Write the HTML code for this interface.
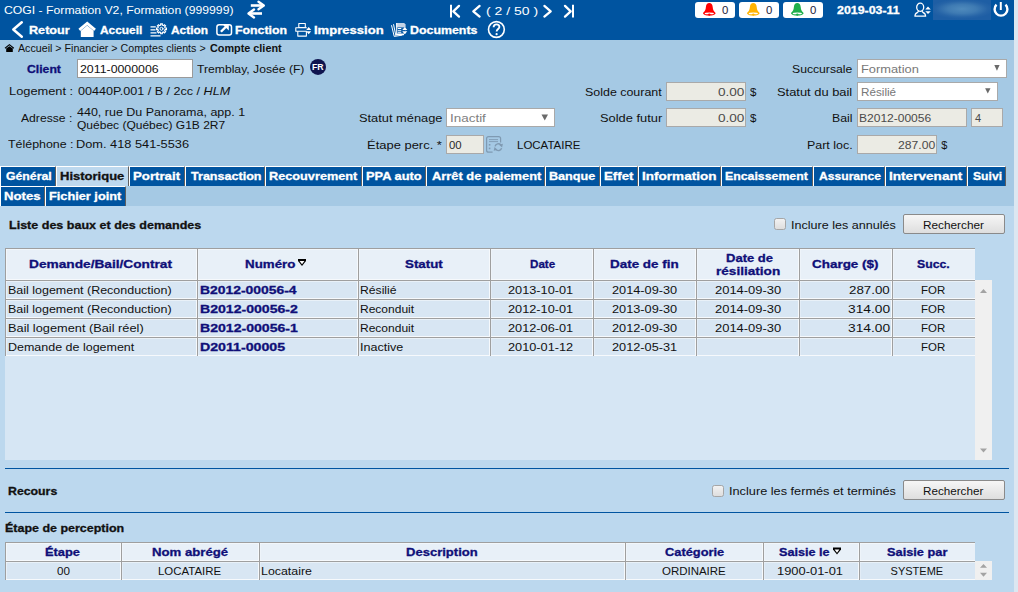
<!DOCTYPE html>
<html><head><meta charset="utf-8"><style>
html,body{margin:0;padding:0;width:1018px;height:592px;overflow:hidden;background:#A5C9E4;font-family:"Liberation Sans",sans-serif;}
</style></head><body>
<div style="position:absolute;left:0px;top:0px;width:1014px;height:40px;background:#0054A0"></div><div style="position:absolute;left:1014px;top:0px;width:4px;height:592px;background:#DCE7F1"></div><div style="position:absolute;left:0px;top:206px;width:1014px;height:386px;background:#BCD8EE"></div><div style="position:absolute;left:695px;top:2px;width:40px;height:16px;background:#fff;border-radius:3px"></div><div style="position:absolute;left:739px;top:2px;width:40px;height:16px;background:#fff;border-radius:3px"></div><div style="position:absolute;left:783px;top:2px;width:40px;height:16px;background:#fff;border-radius:3px"></div><div style="position:absolute;left:77px;top:59px;width:116px;height:19px;background:#fff;border:1px solid #9a9a9a;box-sizing:border-box"></div><div style="position:absolute;left:446px;top:108px;width:109px;height:19px;background:#fff;border:1px solid #a9a9a9;box-sizing:border-box"></div><div style="position:absolute;left:446px;top:135px;width:38px;height:19px;background:#EBEBE4;border:1px solid #a9a9a9;box-sizing:border-box"></div><div style="position:absolute;left:666px;top:82px;width:80px;height:19px;background:#EBEBE4;border:1px solid #a9a9a9;box-sizing:border-box"></div><div style="position:absolute;left:666px;top:108px;width:80px;height:19px;background:#EBEBE4;border:1px solid #a9a9a9;box-sizing:border-box"></div><div style="position:absolute;left:857px;top:59px;width:150px;height:19px;background:#fff;border:1px solid #a9a9a9;box-sizing:border-box"></div><div style="position:absolute;left:857px;top:82px;width:141px;height:19px;background:#fff;border:1px solid #a9a9a9;box-sizing:border-box"></div><div style="position:absolute;left:857px;top:108px;width:110px;height:19px;background:#EBEBE4;border:1px solid #a9a9a9;box-sizing:border-box"></div><div style="position:absolute;left:971px;top:108px;width:32px;height:19px;background:#EBEBE4;border:1px solid #a9a9a9;box-sizing:border-box"></div><div style="position:absolute;left:857px;top:135px;width:80px;height:19px;background:#EBEBE4;border:1px solid #a9a9a9;box-sizing:border-box"></div><div style="position:absolute;left:0px;top:166px;width:56px;height:20px;background:#0054A0;border-top:1px solid #fff;border-left:1px solid #fff;border-right:1px solid #5f5f5f;box-sizing:border-box"></div><div style="position:absolute;left:56px;top:166px;width:73px;height:20px;background:#BDD8EE;border-top:1px solid #fff;border-left:1px solid #fff;border-right:1px solid #5f5f5f;box-sizing:border-box"></div><div style="position:absolute;left:129px;top:166px;width:56px;height:20px;background:#0054A0;border-top:1px solid #fff;border-left:1px solid #fff;border-right:1px solid #5f5f5f;box-sizing:border-box"></div><div style="position:absolute;left:185px;top:166px;width:80px;height:20px;background:#0054A0;border-top:1px solid #fff;border-left:1px solid #fff;border-right:1px solid #5f5f5f;box-sizing:border-box"></div><div style="position:absolute;left:265px;top:166px;width:97px;height:20px;background:#0054A0;border-top:1px solid #fff;border-left:1px solid #fff;border-right:1px solid #5f5f5f;box-sizing:border-box"></div><div style="position:absolute;left:362px;top:166px;width:64px;height:20px;background:#0054A0;border-top:1px solid #fff;border-left:1px solid #fff;border-right:1px solid #5f5f5f;box-sizing:border-box"></div><div style="position:absolute;left:426px;top:166px;width:119px;height:20px;background:#0054A0;border-top:1px solid #fff;border-left:1px solid #fff;border-right:1px solid #5f5f5f;box-sizing:border-box"></div><div style="position:absolute;left:545px;top:166px;width:55px;height:20px;background:#0054A0;border-top:1px solid #fff;border-left:1px solid #fff;border-right:1px solid #5f5f5f;box-sizing:border-box"></div><div style="position:absolute;left:600px;top:166px;width:38px;height:20px;background:#0054A0;border-top:1px solid #fff;border-left:1px solid #fff;border-right:1px solid #5f5f5f;box-sizing:border-box"></div><div style="position:absolute;left:638px;top:166px;width:83px;height:20px;background:#0054A0;border-top:1px solid #fff;border-left:1px solid #fff;border-right:1px solid #5f5f5f;box-sizing:border-box"></div><div style="position:absolute;left:721px;top:166px;width:92px;height:20px;background:#0054A0;border-top:1px solid #fff;border-left:1px solid #fff;border-right:1px solid #5f5f5f;box-sizing:border-box"></div><div style="position:absolute;left:813px;top:166px;width:72px;height:20px;background:#0054A0;border-top:1px solid #fff;border-left:1px solid #fff;border-right:1px solid #5f5f5f;box-sizing:border-box"></div><div style="position:absolute;left:885px;top:166px;width:82px;height:20px;background:#0054A0;border-top:1px solid #fff;border-left:1px solid #fff;border-right:1px solid #5f5f5f;box-sizing:border-box"></div><div style="position:absolute;left:967px;top:166px;width:39px;height:20px;background:#0054A0;border-top:1px solid #fff;border-left:1px solid #fff;border-right:1px solid #5f5f5f;box-sizing:border-box"></div><div style="position:absolute;left:0px;top:186px;width:45px;height:20px;background:#0054A0;border-top:1px solid #fff;border-left:1px solid #fff;border-right:1px solid #5f5f5f;box-sizing:border-box"></div><div style="position:absolute;left:45px;top:186px;width:81px;height:20px;background:#0054A0;border-top:1px solid #fff;border-left:1px solid #fff;border-right:1px solid #5f5f5f;box-sizing:border-box"></div><div style="position:absolute;left:774px;top:218px;width:12px;height:12px;background:linear-gradient(#f2f2f2,#dedede);border:1px solid #a6a6a6;border-radius:2.5px;box-sizing:border-box"></div><div style="position:absolute;left:903px;top:214px;width:102px;height:20px;background:linear-gradient(#f6f6f6,#dedede);border:1px solid #8a8a8a;border-radius:2px;box-sizing:border-box"></div><div style="position:absolute;left:5px;top:248px;width:970px;height:32px;background:#E8F0F8"></div><div style="position:absolute;left:6px;top:249px;width:969px;height:1px;background:rgba(255,255,255,0.45)"></div><div style="position:absolute;left:6px;top:249px;width:1px;height:31px;background:rgba(255,255,255,0.45)"></div><div style="position:absolute;left:5px;top:279px;width:970px;height:1px;background:#F6F9FC"></div><div style="position:absolute;left:5px;top:248px;width:970px;height:1px;background:#9f9f9f"></div><div style="position:absolute;left:5px;top:248px;width:1px;height:32px;background:#9f9f9f"></div><div style="position:absolute;left:196px;top:249px;width:1px;height:31px;background:#F6F9FC"></div><div style="position:absolute;left:197px;top:248px;width:1px;height:32px;background:#9f9f9f"></div><div style="position:absolute;left:198px;top:249px;width:1px;height:31px;background:rgba(255,255,255,0.25)"></div><div style="position:absolute;left:357px;top:249px;width:1px;height:31px;background:#F6F9FC"></div><div style="position:absolute;left:358px;top:248px;width:1px;height:32px;background:#9f9f9f"></div><div style="position:absolute;left:359px;top:249px;width:1px;height:31px;background:rgba(255,255,255,0.25)"></div><div style="position:absolute;left:489px;top:249px;width:1px;height:31px;background:#F6F9FC"></div><div style="position:absolute;left:490px;top:248px;width:1px;height:32px;background:#9f9f9f"></div><div style="position:absolute;left:491px;top:249px;width:1px;height:31px;background:rgba(255,255,255,0.25)"></div><div style="position:absolute;left:592px;top:249px;width:1px;height:31px;background:#F6F9FC"></div><div style="position:absolute;left:593px;top:248px;width:1px;height:32px;background:#9f9f9f"></div><div style="position:absolute;left:594px;top:249px;width:1px;height:31px;background:rgba(255,255,255,0.25)"></div><div style="position:absolute;left:695px;top:249px;width:1px;height:31px;background:#F6F9FC"></div><div style="position:absolute;left:696px;top:248px;width:1px;height:32px;background:#9f9f9f"></div><div style="position:absolute;left:697px;top:249px;width:1px;height:31px;background:rgba(255,255,255,0.25)"></div><div style="position:absolute;left:798px;top:249px;width:1px;height:31px;background:#F6F9FC"></div><div style="position:absolute;left:799px;top:248px;width:1px;height:32px;background:#9f9f9f"></div><div style="position:absolute;left:800px;top:249px;width:1px;height:31px;background:rgba(255,255,255,0.25)"></div><div style="position:absolute;left:891px;top:249px;width:1px;height:31px;background:#F6F9FC"></div><div style="position:absolute;left:892px;top:248px;width:1px;height:32px;background:#9f9f9f"></div><div style="position:absolute;left:893px;top:249px;width:1px;height:31px;background:rgba(255,255,255,0.25)"></div><div style="position:absolute;left:5px;top:280px;width:987px;height:180px;background:#D6E6F4"></div><div style="position:absolute;left:975px;top:280px;width:17px;height:180px;background:#F0F0F0"></div><div style="position:absolute;left:5px;top:280px;width:970px;height:19px;background:#D8E6F3"></div><div style="position:absolute;left:6px;top:281px;width:969px;height:1px;background:rgba(255,255,255,0.45)"></div><div style="position:absolute;left:6px;top:281px;width:1px;height:18px;background:rgba(255,255,255,0.45)"></div><div style="position:absolute;left:5px;top:298px;width:970px;height:1px;background:#F6F9FC"></div><div style="position:absolute;left:5px;top:280px;width:970px;height:1px;background:#9f9f9f"></div><div style="position:absolute;left:5px;top:280px;width:1px;height:19px;background:#9f9f9f"></div><div style="position:absolute;left:196px;top:281px;width:1px;height:18px;background:#F6F9FC"></div><div style="position:absolute;left:197px;top:280px;width:1px;height:19px;background:#9f9f9f"></div><div style="position:absolute;left:198px;top:281px;width:1px;height:18px;background:rgba(255,255,255,0.25)"></div><div style="position:absolute;left:357px;top:281px;width:1px;height:18px;background:#F6F9FC"></div><div style="position:absolute;left:358px;top:280px;width:1px;height:19px;background:#9f9f9f"></div><div style="position:absolute;left:359px;top:281px;width:1px;height:18px;background:rgba(255,255,255,0.25)"></div><div style="position:absolute;left:489px;top:281px;width:1px;height:18px;background:#F6F9FC"></div><div style="position:absolute;left:490px;top:280px;width:1px;height:19px;background:#9f9f9f"></div><div style="position:absolute;left:491px;top:281px;width:1px;height:18px;background:rgba(255,255,255,0.25)"></div><div style="position:absolute;left:592px;top:281px;width:1px;height:18px;background:#F6F9FC"></div><div style="position:absolute;left:593px;top:280px;width:1px;height:19px;background:#9f9f9f"></div><div style="position:absolute;left:594px;top:281px;width:1px;height:18px;background:rgba(255,255,255,0.25)"></div><div style="position:absolute;left:695px;top:281px;width:1px;height:18px;background:#F6F9FC"></div><div style="position:absolute;left:696px;top:280px;width:1px;height:19px;background:#9f9f9f"></div><div style="position:absolute;left:697px;top:281px;width:1px;height:18px;background:rgba(255,255,255,0.25)"></div><div style="position:absolute;left:798px;top:281px;width:1px;height:18px;background:#F6F9FC"></div><div style="position:absolute;left:799px;top:280px;width:1px;height:19px;background:#9f9f9f"></div><div style="position:absolute;left:800px;top:281px;width:1px;height:18px;background:rgba(255,255,255,0.25)"></div><div style="position:absolute;left:891px;top:281px;width:1px;height:18px;background:#F6F9FC"></div><div style="position:absolute;left:892px;top:280px;width:1px;height:19px;background:#9f9f9f"></div><div style="position:absolute;left:893px;top:281px;width:1px;height:18px;background:rgba(255,255,255,0.25)"></div><div style="position:absolute;left:5px;top:299px;width:970px;height:19px;background:#D8E6F3"></div><div style="position:absolute;left:6px;top:300px;width:969px;height:1px;background:rgba(255,255,255,0.45)"></div><div style="position:absolute;left:6px;top:300px;width:1px;height:18px;background:rgba(255,255,255,0.45)"></div><div style="position:absolute;left:5px;top:317px;width:970px;height:1px;background:#F6F9FC"></div><div style="position:absolute;left:5px;top:299px;width:970px;height:1px;background:#9f9f9f"></div><div style="position:absolute;left:5px;top:299px;width:1px;height:19px;background:#9f9f9f"></div><div style="position:absolute;left:196px;top:300px;width:1px;height:18px;background:#F6F9FC"></div><div style="position:absolute;left:197px;top:299px;width:1px;height:19px;background:#9f9f9f"></div><div style="position:absolute;left:198px;top:300px;width:1px;height:18px;background:rgba(255,255,255,0.25)"></div><div style="position:absolute;left:357px;top:300px;width:1px;height:18px;background:#F6F9FC"></div><div style="position:absolute;left:358px;top:299px;width:1px;height:19px;background:#9f9f9f"></div><div style="position:absolute;left:359px;top:300px;width:1px;height:18px;background:rgba(255,255,255,0.25)"></div><div style="position:absolute;left:489px;top:300px;width:1px;height:18px;background:#F6F9FC"></div><div style="position:absolute;left:490px;top:299px;width:1px;height:19px;background:#9f9f9f"></div><div style="position:absolute;left:491px;top:300px;width:1px;height:18px;background:rgba(255,255,255,0.25)"></div><div style="position:absolute;left:592px;top:300px;width:1px;height:18px;background:#F6F9FC"></div><div style="position:absolute;left:593px;top:299px;width:1px;height:19px;background:#9f9f9f"></div><div style="position:absolute;left:594px;top:300px;width:1px;height:18px;background:rgba(255,255,255,0.25)"></div><div style="position:absolute;left:695px;top:300px;width:1px;height:18px;background:#F6F9FC"></div><div style="position:absolute;left:696px;top:299px;width:1px;height:19px;background:#9f9f9f"></div><div style="position:absolute;left:697px;top:300px;width:1px;height:18px;background:rgba(255,255,255,0.25)"></div><div style="position:absolute;left:798px;top:300px;width:1px;height:18px;background:#F6F9FC"></div><div style="position:absolute;left:799px;top:299px;width:1px;height:19px;background:#9f9f9f"></div><div style="position:absolute;left:800px;top:300px;width:1px;height:18px;background:rgba(255,255,255,0.25)"></div><div style="position:absolute;left:891px;top:300px;width:1px;height:18px;background:#F6F9FC"></div><div style="position:absolute;left:892px;top:299px;width:1px;height:19px;background:#9f9f9f"></div><div style="position:absolute;left:893px;top:300px;width:1px;height:18px;background:rgba(255,255,255,0.25)"></div><div style="position:absolute;left:5px;top:318px;width:970px;height:19px;background:#D8E6F3"></div><div style="position:absolute;left:6px;top:319px;width:969px;height:1px;background:rgba(255,255,255,0.45)"></div><div style="position:absolute;left:6px;top:319px;width:1px;height:18px;background:rgba(255,255,255,0.45)"></div><div style="position:absolute;left:5px;top:336px;width:970px;height:1px;background:#F6F9FC"></div><div style="position:absolute;left:5px;top:318px;width:970px;height:1px;background:#9f9f9f"></div><div style="position:absolute;left:5px;top:318px;width:1px;height:19px;background:#9f9f9f"></div><div style="position:absolute;left:196px;top:319px;width:1px;height:18px;background:#F6F9FC"></div><div style="position:absolute;left:197px;top:318px;width:1px;height:19px;background:#9f9f9f"></div><div style="position:absolute;left:198px;top:319px;width:1px;height:18px;background:rgba(255,255,255,0.25)"></div><div style="position:absolute;left:357px;top:319px;width:1px;height:18px;background:#F6F9FC"></div><div style="position:absolute;left:358px;top:318px;width:1px;height:19px;background:#9f9f9f"></div><div style="position:absolute;left:359px;top:319px;width:1px;height:18px;background:rgba(255,255,255,0.25)"></div><div style="position:absolute;left:489px;top:319px;width:1px;height:18px;background:#F6F9FC"></div><div style="position:absolute;left:490px;top:318px;width:1px;height:19px;background:#9f9f9f"></div><div style="position:absolute;left:491px;top:319px;width:1px;height:18px;background:rgba(255,255,255,0.25)"></div><div style="position:absolute;left:592px;top:319px;width:1px;height:18px;background:#F6F9FC"></div><div style="position:absolute;left:593px;top:318px;width:1px;height:19px;background:#9f9f9f"></div><div style="position:absolute;left:594px;top:319px;width:1px;height:18px;background:rgba(255,255,255,0.25)"></div><div style="position:absolute;left:695px;top:319px;width:1px;height:18px;background:#F6F9FC"></div><div style="position:absolute;left:696px;top:318px;width:1px;height:19px;background:#9f9f9f"></div><div style="position:absolute;left:697px;top:319px;width:1px;height:18px;background:rgba(255,255,255,0.25)"></div><div style="position:absolute;left:798px;top:319px;width:1px;height:18px;background:#F6F9FC"></div><div style="position:absolute;left:799px;top:318px;width:1px;height:19px;background:#9f9f9f"></div><div style="position:absolute;left:800px;top:319px;width:1px;height:18px;background:rgba(255,255,255,0.25)"></div><div style="position:absolute;left:891px;top:319px;width:1px;height:18px;background:#F6F9FC"></div><div style="position:absolute;left:892px;top:318px;width:1px;height:19px;background:#9f9f9f"></div><div style="position:absolute;left:893px;top:319px;width:1px;height:18px;background:rgba(255,255,255,0.25)"></div><div style="position:absolute;left:5px;top:337px;width:970px;height:19px;background:#D8E6F3"></div><div style="position:absolute;left:6px;top:338px;width:969px;height:1px;background:rgba(255,255,255,0.45)"></div><div style="position:absolute;left:6px;top:338px;width:1px;height:18px;background:rgba(255,255,255,0.45)"></div><div style="position:absolute;left:5px;top:355px;width:970px;height:1px;background:#F6F9FC"></div><div style="position:absolute;left:5px;top:337px;width:970px;height:1px;background:#9f9f9f"></div><div style="position:absolute;left:5px;top:337px;width:1px;height:19px;background:#9f9f9f"></div><div style="position:absolute;left:196px;top:338px;width:1px;height:18px;background:#F6F9FC"></div><div style="position:absolute;left:197px;top:337px;width:1px;height:19px;background:#9f9f9f"></div><div style="position:absolute;left:198px;top:338px;width:1px;height:18px;background:rgba(255,255,255,0.25)"></div><div style="position:absolute;left:357px;top:338px;width:1px;height:18px;background:#F6F9FC"></div><div style="position:absolute;left:358px;top:337px;width:1px;height:19px;background:#9f9f9f"></div><div style="position:absolute;left:359px;top:338px;width:1px;height:18px;background:rgba(255,255,255,0.25)"></div><div style="position:absolute;left:489px;top:338px;width:1px;height:18px;background:#F6F9FC"></div><div style="position:absolute;left:490px;top:337px;width:1px;height:19px;background:#9f9f9f"></div><div style="position:absolute;left:491px;top:338px;width:1px;height:18px;background:rgba(255,255,255,0.25)"></div><div style="position:absolute;left:592px;top:338px;width:1px;height:18px;background:#F6F9FC"></div><div style="position:absolute;left:593px;top:337px;width:1px;height:19px;background:#9f9f9f"></div><div style="position:absolute;left:594px;top:338px;width:1px;height:18px;background:rgba(255,255,255,0.25)"></div><div style="position:absolute;left:695px;top:338px;width:1px;height:18px;background:#F6F9FC"></div><div style="position:absolute;left:696px;top:337px;width:1px;height:19px;background:#9f9f9f"></div><div style="position:absolute;left:697px;top:338px;width:1px;height:18px;background:rgba(255,255,255,0.25)"></div><div style="position:absolute;left:798px;top:338px;width:1px;height:18px;background:#F6F9FC"></div><div style="position:absolute;left:799px;top:337px;width:1px;height:19px;background:#9f9f9f"></div><div style="position:absolute;left:800px;top:338px;width:1px;height:18px;background:rgba(255,255,255,0.25)"></div><div style="position:absolute;left:891px;top:338px;width:1px;height:18px;background:#F6F9FC"></div><div style="position:absolute;left:892px;top:337px;width:1px;height:19px;background:#9f9f9f"></div><div style="position:absolute;left:893px;top:338px;width:1px;height:18px;background:rgba(255,255,255,0.25)"></div><div style="position:absolute;left:5px;top:468px;width:1004px;height:1px;background:#0054A0"></div><div style="position:absolute;left:712px;top:485px;width:12px;height:12px;background:linear-gradient(#f2f2f2,#dedede);border:1px solid #a6a6a6;border-radius:2.5px;box-sizing:border-box"></div><div style="position:absolute;left:903px;top:480px;width:102px;height:20px;background:linear-gradient(#f6f6f6,#dedede);border:1px solid #8a8a8a;border-radius:2px;box-sizing:border-box"></div><div style="position:absolute;left:5px;top:512px;width:1004px;height:1px;background:#0054A0"></div><div style="position:absolute;left:5px;top:542px;width:970px;height:19px;background:#E8F0F8"></div><div style="position:absolute;left:6px;top:543px;width:969px;height:1px;background:rgba(255,255,255,0.45)"></div><div style="position:absolute;left:6px;top:543px;width:1px;height:18px;background:rgba(255,255,255,0.45)"></div><div style="position:absolute;left:5px;top:560px;width:970px;height:1px;background:#F6F9FC"></div><div style="position:absolute;left:5px;top:542px;width:970px;height:1px;background:#9f9f9f"></div><div style="position:absolute;left:5px;top:542px;width:1px;height:19px;background:#9f9f9f"></div><div style="position:absolute;left:120px;top:543px;width:1px;height:18px;background:#F6F9FC"></div><div style="position:absolute;left:121px;top:542px;width:1px;height:19px;background:#9f9f9f"></div><div style="position:absolute;left:122px;top:543px;width:1px;height:18px;background:rgba(255,255,255,0.25)"></div><div style="position:absolute;left:258px;top:543px;width:1px;height:18px;background:#F6F9FC"></div><div style="position:absolute;left:259px;top:542px;width:1px;height:19px;background:#9f9f9f"></div><div style="position:absolute;left:260px;top:543px;width:1px;height:18px;background:rgba(255,255,255,0.25)"></div><div style="position:absolute;left:624px;top:543px;width:1px;height:18px;background:#F6F9FC"></div><div style="position:absolute;left:625px;top:542px;width:1px;height:19px;background:#9f9f9f"></div><div style="position:absolute;left:626px;top:543px;width:1px;height:18px;background:rgba(255,255,255,0.25)"></div><div style="position:absolute;left:762px;top:543px;width:1px;height:18px;background:#F6F9FC"></div><div style="position:absolute;left:763px;top:542px;width:1px;height:19px;background:#9f9f9f"></div><div style="position:absolute;left:764px;top:543px;width:1px;height:18px;background:rgba(255,255,255,0.25)"></div><div style="position:absolute;left:858px;top:543px;width:1px;height:18px;background:#F6F9FC"></div><div style="position:absolute;left:859px;top:542px;width:1px;height:19px;background:#9f9f9f"></div><div style="position:absolute;left:860px;top:543px;width:1px;height:18px;background:rgba(255,255,255,0.25)"></div><div style="position:absolute;left:5px;top:561px;width:970px;height:19px;background:#D8E6F3"></div><div style="position:absolute;left:6px;top:562px;width:969px;height:1px;background:rgba(255,255,255,0.45)"></div><div style="position:absolute;left:6px;top:562px;width:1px;height:18px;background:rgba(255,255,255,0.45)"></div><div style="position:absolute;left:5px;top:579px;width:970px;height:1px;background:#F6F9FC"></div><div style="position:absolute;left:5px;top:561px;width:970px;height:1px;background:#9f9f9f"></div><div style="position:absolute;left:5px;top:561px;width:1px;height:19px;background:#9f9f9f"></div><div style="position:absolute;left:120px;top:562px;width:1px;height:18px;background:#F6F9FC"></div><div style="position:absolute;left:121px;top:561px;width:1px;height:19px;background:#9f9f9f"></div><div style="position:absolute;left:122px;top:562px;width:1px;height:18px;background:rgba(255,255,255,0.25)"></div><div style="position:absolute;left:258px;top:562px;width:1px;height:18px;background:#F6F9FC"></div><div style="position:absolute;left:259px;top:561px;width:1px;height:19px;background:#9f9f9f"></div><div style="position:absolute;left:260px;top:562px;width:1px;height:18px;background:rgba(255,255,255,0.25)"></div><div style="position:absolute;left:624px;top:562px;width:1px;height:18px;background:#F6F9FC"></div><div style="position:absolute;left:625px;top:561px;width:1px;height:19px;background:#9f9f9f"></div><div style="position:absolute;left:626px;top:562px;width:1px;height:18px;background:rgba(255,255,255,0.25)"></div><div style="position:absolute;left:762px;top:562px;width:1px;height:18px;background:#F6F9FC"></div><div style="position:absolute;left:763px;top:561px;width:1px;height:19px;background:#9f9f9f"></div><div style="position:absolute;left:764px;top:562px;width:1px;height:18px;background:rgba(255,255,255,0.25)"></div><div style="position:absolute;left:858px;top:562px;width:1px;height:18px;background:#F6F9FC"></div><div style="position:absolute;left:859px;top:561px;width:1px;height:19px;background:#9f9f9f"></div><div style="position:absolute;left:860px;top:562px;width:1px;height:18px;background:rgba(255,255,255,0.25)"></div><div style="position:absolute;left:975px;top:561px;width:17px;height:19px;background:#F0F0F0"></div>
<div style="position:absolute;left:933px;top:0;width:58px;height:20px;background:radial-gradient(ellipse 32px 10px at 29px 9px,#4f8abc 0%,#3f7bb3 45%,#2664a7 80%,#1e5ea4 100%)"></div>
<svg style="position:absolute;left:0;top:0" width="1018" height="592" viewBox="0 0 1018 592">
<g fill="none" stroke="#fff" stroke-linecap="round" stroke-linejoin="round">
  <!-- swap arrows -->
  <path d="M250.8 5.5 H263.5" stroke-width="2.6" stroke-linecap="butt"/>
  <path d="M258.5 1.8 L263.8 5.5 L258.5 9.2" stroke-width="2.4"/>
  <path d="M262 13.5 H249" stroke-width="2.6" stroke-linecap="butt"/>
  <path d="M254 9.5 L248.5 13.5 L254 17.4" stroke-width="2.4"/>
  <!-- back chevron -->
  <path d="M21.8 22.3 L13.3 29.5 L21.8 36.8" stroke-width="2.5"/>
  <!-- pagination -->
  <path d="M451 4.8 V17.5" stroke-width="2" stroke-linecap="butt"/>
  <path d="M459 5.9 L453.3 11.3 L459 16.6" stroke-width="2.3"/>
  <path d="M479.6 5.9 L473.3 11.3 L479.6 16.6" stroke-width="2.3"/>
  <path d="M544.4 5.9 L550.7 11.3 L544.4 16.6" stroke-width="2.3"/>
  <path d="M565 5.9 L570.7 11.3 L565 16.6" stroke-width="2.3"/>
  <path d="M573 4.8 V17.5" stroke-width="2" stroke-linecap="butt"/>
  <!-- house roof -->
  <path d="M79.3 29.8 L87.2 23.3 L95 29.8" stroke-width="2.8" stroke-linecap="butt" stroke-linejoin="miter"/>
  <!-- action lines -->
  <path d="M150.5 26.9 H155.8 M150.5 29.8 H155.5 M150.5 32.8 H156.5 M150.5 35.8 H160.5" stroke-width="1.2" stroke-linecap="butt"/>
  <!-- gear -->
  <path d="M166.43 27.98 L166.43 29.62 L165.09 29.69 L164.67 30.71 L165.57 31.71 L164.41 32.87 L163.41 31.97 L162.39 32.39 L162.32 33.73 L160.68 33.73 L160.61 32.39 L159.59 31.97 L158.59 32.87 L157.43 31.71 L158.33 30.71 L157.91 29.69 L156.57 29.62 L156.57 27.98 L157.91 27.91 L158.33 26.89 L157.43 25.89 L158.59 24.73 L159.59 25.63 L160.61 25.21 L160.68 23.87 L162.32 23.87 L162.39 25.21 L163.41 25.63 L164.41 24.73 L165.57 25.89 L164.67 26.89 L165.09 27.91 Z" stroke-width="1.2" stroke-linejoin="miter"/>
  <circle cx="161.5" cy="28.8" r="1.5" stroke-width="1"/>
  <!-- fonction -->
  <rect x="216.9" y="24.8" width="14.6" height="10.2" rx="2.3" stroke-width="1.5"/>
  <path d="M220.9 31.8 L226.6 26.1" stroke-width="2.3" stroke-linecap="butt"/>
  
  <!-- printer -->
  <rect x="298.8" y="23.5" width="6.5" height="4" stroke-width="1.1"/>
  <path d="M297.3 31.3 H295.8 V27.8 H306.4" stroke-width="1.1"/>
  <rect x="297.8" y="31.2" width="8.6" height="4.9" stroke-width="1.1"/>
  <!-- documents -->
  <path d="M391.6 25.6 L394.2 36.4 L402 35.2" stroke-width="1"/>
  <path d="M393.6 24.6 L395.8 35.4" stroke-width="1"/>
  <!-- help -->
  <circle cx="496.4" cy="29.5" r="7.9" stroke-width="1.6"/>
  <path d="M493.6 27.2 C493.6 25.2 495 24.3 496.5 24.3 C498.2 24.3 499.4 25.4 499.4 27 C499.4 28.9 496.6 29.2 496.6 31.6" stroke-width="1.8" stroke-linecap="butt"/>
  <!-- user -->
  <ellipse cx="920.2" cy="7.3" rx="3.5" ry="4.1" stroke-width="1.3"/>
  <path d="M918.4 11.2 C918.6 12.4 916.5 12.6 915.4 14.2 L914.9 16.2 H925.6 L925.1 14.2 C924 12.6 921.9 12.4 922.1 11.2" stroke-width="1.3"/>
  <!-- power -->
  <path d="M996.5 4.7 A6.4 6.4 0 1 0 1005.5 4.7" stroke-width="2.4" stroke-linecap="butt"/>
  <path d="M1000.8 2 V10" stroke-width="2" stroke-linecap="butt"/>
</g>
<g fill="#fff" stroke="none">
  <!-- house body -->
  <path d="M80.8 30.8 L87.2 25.6 L93.6 30.8 V37.1 H80.8 Z"/>
  <path d="M222.4 24.2 H228.8 V30.6 Z"/>
  <!-- printer arrows -->
  <path d="M306.2 30 L308.7 27 L311.2 30 Z M306.2 31.2 L308.7 34.2 L311.2 31.2 Z"/>
  <!-- documents pages -->
  <path d="M396.2 23 H404.2 L405.6 24.6 V33.6 H396.2 Z" fill="#c3d3e6"/>
  <path d="M396.2 27.4 H405.6 V33.6 H396.2 Z" fill="#0a5aa5"/>
  <path d="M396.2 33.6 H404 V35.2 H396.2 Z" fill="#fff"/>
  <path d="M396.2 23 V35 H397.2 V23 Z" fill="#fff"/>
  <path d="M397.8 28 H401.2 V29.1 H397.8 Z M397.8 30.2 H401.2 V31.3 H397.8 Z M397.8 32.2 H401.2 V33.2 H397.8 Z" fill="#fff"/>
  <path d="M402.3 30 L404.8 27 L407.3 30 Z M402.3 31.2 L404.8 34.2 L407.3 31.2 Z"/>
  <circle cx="496.6" cy="34.2" r="1.1"/>
  <!-- user arrows -->
  <path d="M925.3 9.4 L928 6.6 L930.8 9.4 Z M925.3 11.3 L928 14.1 L930.8 11.3 Z"/>
</g>
<path d="M5.0 48.2 L9.4 44.6 L13.8 48.2" fill="none" stroke="#000" stroke-width="1.1"/><path d="M6.2 48.6 L9.4 46.2 L12.8 48.6 V52 H6.2 Z" fill="#000"/>

<!-- FR -->
<circle cx="318" cy="66.9" r="8" fill="#10154F"/>
<!-- sort triangles -->
<path d="M298 259 H306 V261 L302 266 L298 261 Z" fill="#000"/><path d="M299.6 260.9 H304.4 L302 264.2 Z" fill="#fff"/>
<path d="M833 547.5 H841 V549.5 L837 554.5 L833 549.5 Z" fill="#000"/><path d="M834.6 549.4 H839.4 L837 552.7 Z" fill="#fff"/>
<!-- scrollbar arrows -->
<path d="M980 293 L983.5 289 L987 293 Z M980 448.5 L983.5 452.5 L987 448.5 Z" fill="#A3A3A3"/>
<path d="M980 567.8 L983.5 564 L987 567.8 Z M980 572.8 L983.5 576.8 L987 572.8 Z" fill="#A3A3A3"/>
<!-- select arrows -->
<path d="M541.5 114.5 L548 114.5 L544.75 120.5 Z" fill="#6a6a6a"/>
<path d="M994.3 65.1 L999.6 65.1 L996.95 70.8 Z" fill="#6a6a6a"/>
<path d="M985.1 88.3 L990.5 88.3 L987.8 93.6 Z" fill="#6a6a6a"/>
<!-- refresh icon -->
<g fill="none" stroke="#7f9ab2" stroke-width="1.2">
<path d="M492.6 152.2 H488.6 C487.4 152.2 486.6 151.4 486.6 150.2 V138.6 C486.6 137.4 487.4 136.6 488.6 136.6 H498.6 C499.8 136.6 500.6 137.4 500.6 138.6 V142.4"/>
<path d="M489 139.6 H498 M489 141.6 H498" stroke-width="0.9"/>
<path d="M495.02 146.32 A3.4 3.4 0 0 1 500.90 145.01" stroke-width="1.4"/>
<path d="M501.58 148.08 A3.4 3.4 0 0 1 495.70 149.39" stroke-width="1.4"/>
</g>
<path d="M499.00 144.71 L502.90 143.71 L502.10 147.41 Z M497.60 149.69 L493.70 150.69 L494.50 146.99 Z" fill="#7f9ab2"/>
<rect x="488.8" y="144" width="1.6" height="1.6" fill="#7f9ab2"/><rect x="488.8" y="147.6" width="1.6" height="1.6" fill="#7f9ab2"/>
<!-- bells -->
<g stroke="none">
  <path fill="#FF0000" d="M703.0 13 C704.8 11.5 705.6999999999999 10 705.9 7 C706.0999999999999 4.6 707.3 3.1 709.3 3.1 C711.3 3.1 712.5 4.6 712.6999999999999 7 C712.9 10 713.8 11.5 715.5999999999999 13 C715.8 14.6 712.3 15.6 709.3 15.6 C706.3 15.6 702.8 14.6 703.0 13 Z"/><ellipse cx="709.3" cy="13.4" rx="4.6" ry="0.9" fill="#fff"/><circle cx="709.3" cy="14.6" r="1.2" fill="#FF0000"/><path fill="#FFB300" d="M747.0 13 C748.8 11.5 749.6999999999999 10 749.9 7 C750.0999999999999 4.6 751.3 3.1 753.3 3.1 C755.3 3.1 756.5 4.6 756.6999999999999 7 C756.9 10 757.8 11.5 759.5999999999999 13 C759.8 14.6 756.3 15.6 753.3 15.6 C750.3 15.6 746.8 14.6 747.0 13 Z"/><ellipse cx="753.3" cy="13.4" rx="4.6" ry="0.9" fill="#fff"/><circle cx="753.3" cy="14.6" r="1.2" fill="#FFB300"/><path fill="#1FAF4B" d="M791.0 13 C792.8 11.5 793.6999999999999 10 793.9 7 C794.0999999999999 4.6 795.3 3.1 797.3 3.1 C799.3 3.1 800.5 4.6 800.6999999999999 7 C800.9 10 801.8 11.5 803.5999999999999 13 C803.8 14.6 800.3 15.6 797.3 15.6 C794.3 15.6 790.8 14.6 791.0 13 Z"/><ellipse cx="797.3" cy="13.4" rx="4.6" ry="0.9" fill="#fff"/><circle cx="797.3" cy="14.6" r="1.2" fill="#1FAF4B"/>
</g>
</svg>

<div style="position:absolute;left:4.39px;top:5.00px;font-size:11px;line-height:11px;font-weight:400;font-style:normal;color:#fff;white-space:pre;transform:scaleX(1.1107);transform-origin:0 0;">COGI - Formation V2, Formation (999999)</div><div style="position:absolute;left:29.45px;top:25.00px;font-size:11px;line-height:11px;font-weight:700;font-style:normal;color:#fff;white-space:pre;transform:scaleX(1.1486);transform-origin:0 0;-webkit-text-stroke:0.3px;">Retour</div><div style="position:absolute;left:99.60px;top:25.00px;font-size:11px;line-height:11px;font-weight:700;font-style:normal;color:#fff;white-space:pre;transform:scaleX(1.0821);transform-origin:0 0;-webkit-text-stroke:0.3px;">Accueil</div><div style="position:absolute;left:171.00px;top:25.00px;font-size:11px;line-height:11px;font-weight:700;font-style:normal;color:#fff;white-space:pre;transform:scaleX(1.0824);transform-origin:0 0;-webkit-text-stroke:0.3px;">Action</div><div style="position:absolute;left:235.18px;top:25.00px;font-size:11px;line-height:11px;font-weight:700;font-style:normal;color:#fff;white-space:pre;transform:scaleX(1.1222);transform-origin:0 0;-webkit-text-stroke:0.3px;">Fonction</div><div style="position:absolute;left:314.01px;top:25.00px;font-size:11px;line-height:11px;font-weight:700;font-style:normal;color:#fff;white-space:pre;transform:scaleX(1.1860);transform-origin:0 0;-webkit-text-stroke:0.3px;">Impression</div><div style="position:absolute;left:410.07px;top:25.00px;font-size:11px;line-height:11px;font-weight:700;font-style:normal;color:#fff;white-space:pre;transform:scaleX(1.1254);transform-origin:0 0;-webkit-text-stroke:0.3px;">Documents</div><div style="position:absolute;left:486.13px;top:5.70px;font-size:11px;line-height:11px;font-weight:400;font-style:normal;color:#fff;white-space:pre;transform:scaleX(1.2718);transform-origin:0 0;">( 2 / 50 )</div><div style="position:absolute;left:837.00px;top:5.00px;font-size:11px;line-height:11px;font-weight:700;font-style:normal;color:#fff;white-space:pre;transform:scaleX(1.1250);transform-origin:0 0;-webkit-text-stroke:0.3px;">2019-03-11</div><div style="position:absolute;left:722.00px;top:5.00px;font-size:11px;line-height:11px;font-weight:400;font-style:normal;color:#1a1a3a;white-space:pre;transform:scaleX(1.0333);transform-origin:0 0;">0</div><div style="position:absolute;left:766.00px;top:5.00px;font-size:11px;line-height:11px;font-weight:400;font-style:normal;color:#1a1a3a;white-space:pre;transform:scaleX(1.0333);transform-origin:0 0;">0</div><div style="position:absolute;left:810.00px;top:5.00px;font-size:11px;line-height:11px;font-weight:400;font-style:normal;color:#1a1a3a;white-space:pre;transform:scaleX(1.0333);transform-origin:0 0;">0</div><div style="position:absolute;left:17.70px;top:43.80px;font-size:10px;line-height:10px;font-weight:400;font-style:normal;color:#111;white-space:pre;transform:scaleX(1.0665);transform-origin:0 0;">Accueil &gt; Financier &gt; Comptes clients &gt; </div><div style="position:absolute;left:210.00px;top:43.80px;font-size:10px;line-height:10px;font-weight:700;font-style:normal;color:#111;white-space:pre;transform:scaleX(1.0833);transform-origin:0 0;">Compte client</div><div style="position:absolute;left:26.70px;top:63.70px;font-size:11px;line-height:11px;font-weight:700;font-style:normal;color:#0f0f78;white-space:pre;transform:scaleX(1.1097);transform-origin:0 0;-webkit-text-stroke:0.3px;">Client</div><div style="position:absolute;left:79.50px;top:64.00px;font-size:11px;line-height:11px;font-weight:400;font-style:normal;color:#111;white-space:pre;transform:scaleX(1.1214);transform-origin:0 0;">2011-0000006</div><div style="position:absolute;left:197.40px;top:63.70px;font-size:11px;line-height:11px;font-weight:400;font-style:normal;color:#111;white-space:pre;transform:scaleX(1.1052);transform-origin:0 0;">Tremblay, Josée (F)</div><div style="position:absolute;left:312.34px;top:63.00px;font-size:9px;line-height:9px;font-weight:700;font-style:normal;color:#fff;white-space:pre;transform:scaleX(0.9636);transform-origin:0 0;">FR</div><div style="position:absolute;left:8.83px;top:86.40px;font-size:11px;line-height:11px;font-weight:400;font-style:normal;color:#111;white-space:pre;transform:scaleX(1.1660);transform-origin:0 0;">Logement :</div><div style="position:absolute;left:77.50px;top:86.40px;font-size:11px;line-height:11px;font-weight:400;font-style:normal;color:#111;white-space:pre;transform:scaleX(1.1429);transform-origin:0 0;">00440P.001 / B / 2cc / <i>HLM</i></div><div style="position:absolute;left:21.20px;top:112.80px;font-size:11px;line-height:11px;font-weight:400;font-style:normal;color:#111;white-space:pre;transform:scaleX(1.1043);transform-origin:0 0;">Adresse :</div><div style="position:absolute;left:77.40px;top:106.90px;font-size:11px;line-height:11px;font-weight:400;font-style:normal;color:#111;white-space:pre;transform:scaleX(1.1361);transform-origin:0 0;">440, rue Du Panorama, app. 1</div><div style="position:absolute;left:77.40px;top:119.60px;font-size:11px;line-height:11px;font-weight:400;font-style:normal;color:#111;white-space:pre;transform:scaleX(1.0919);transform-origin:0 0;">Québec (Québec) G1B 2R7</div><div style="position:absolute;left:7.70px;top:139.30px;font-size:11px;line-height:11px;font-weight:400;font-style:normal;color:#111;white-space:pre;transform:scaleX(1.1281);transform-origin:0 0;">Téléphone :</div><div style="position:absolute;left:76.24px;top:139.30px;font-size:11px;line-height:11px;font-weight:400;font-style:normal;color:#111;white-space:pre;transform:scaleX(1.1625);transform-origin:0 0;">Dom. 418 541-5536</div><div style="position:absolute;left:358.63px;top:113.20px;font-size:11px;line-height:11px;font-weight:400;font-style:normal;color:#111;white-space:pre;transform:scaleX(1.1657);transform-origin:0 0;">Statut ménage</div><div style="position:absolute;left:449.98px;top:113.40px;font-size:11px;line-height:11px;font-weight:400;font-style:normal;color:#808080;white-space:pre;transform:scaleX(1.2214);transform-origin:0 0;">Inactif</div><div style="position:absolute;left:367.22px;top:139.50px;font-size:11px;line-height:11px;font-weight:400;font-style:normal;color:#111;white-space:pre;transform:scaleX(1.1774);transform-origin:0 0;">Étape perc. *</div><div style="position:absolute;left:448.60px;top:140.00px;font-size:11px;line-height:11px;font-weight:400;font-style:normal;color:#2a2a2a;white-space:pre;transform:scaleX(1.0333);transform-origin:0 0;">00</div><div style="position:absolute;left:517.46px;top:139.50px;font-size:11px;line-height:11px;font-weight:400;font-style:normal;color:#111;white-space:pre;transform:scaleX(1.0441);transform-origin:0 0;">LOCATAIRE</div><div style="position:absolute;left:584.97px;top:86.80px;font-size:11px;line-height:11px;font-weight:400;font-style:normal;color:#111;white-space:pre;transform:scaleX(1.1299);transform-origin:0 0;">Solde courant</div><div style="position:absolute;left:718.00px;top:86.80px;font-size:11px;line-height:11px;font-weight:400;font-style:normal;color:#4a4a4a;white-space:pre;transform:scaleX(1.2333);transform-origin:0 0;">0.00</div><div style="position:absolute;left:750.00px;top:86.80px;font-size:11px;line-height:11px;font-weight:400;font-style:normal;color:#111;white-space:pre;transform:scaleX(1.0500);transform-origin:0 0;">$</div><div style="position:absolute;left:599.83px;top:112.60px;font-size:11px;line-height:11px;font-weight:400;font-style:normal;color:#111;white-space:pre;transform:scaleX(1.1692);transform-origin:0 0;">Solde futur</div><div style="position:absolute;left:718.00px;top:112.60px;font-size:11px;line-height:11px;font-weight:400;font-style:normal;color:#4a4a4a;white-space:pre;transform:scaleX(1.2333);transform-origin:0 0;">0.00</div><div style="position:absolute;left:750.00px;top:112.60px;font-size:11px;line-height:11px;font-weight:400;font-style:normal;color:#111;white-space:pre;transform:scaleX(1.0500);transform-origin:0 0;">$</div><div style="position:absolute;left:792.49px;top:63.60px;font-size:11px;line-height:11px;font-weight:400;font-style:normal;color:#111;white-space:pre;transform:scaleX(1.1075);transform-origin:0 0;">Succursale</div><div style="position:absolute;left:860.83px;top:63.80px;font-size:11px;line-height:11px;font-weight:400;font-style:normal;color:#777;white-space:pre;transform:scaleX(1.1667);transform-origin:0 0;">Formation</div><div style="position:absolute;left:777.33px;top:86.70px;font-size:11px;line-height:11px;font-weight:400;font-style:normal;color:#111;white-space:pre;transform:scaleX(1.1714);transform-origin:0 0;">Statut du bail</div><div style="position:absolute;left:860.94px;top:87.00px;font-size:11px;line-height:11px;font-weight:400;font-style:normal;color:#777;white-space:pre;transform:scaleX(1.0625);transform-origin:0 0;">Résilié</div><div style="position:absolute;left:832.18px;top:112.80px;font-size:11px;line-height:11px;font-weight:400;font-style:normal;color:#111;white-space:pre;transform:scaleX(1.1176);transform-origin:0 0;">Bail</div><div style="position:absolute;left:858.91px;top:113.00px;font-size:11px;line-height:11px;font-weight:400;font-style:normal;color:#4a4a4a;white-space:pre;transform:scaleX(1.0923);transform-origin:0 0;">B2012-00056</div><div style="position:absolute;left:975.00px;top:113.00px;font-size:11px;line-height:11px;font-weight:400;font-style:normal;color:#4a4a4a;white-space:pre;">4</div><div style="position:absolute;left:807.07px;top:140.00px;font-size:11px;line-height:11px;font-weight:400;font-style:normal;color:#111;white-space:pre;transform:scaleX(1.1308);transform-origin:0 0;">Part loc.</div><div style="position:absolute;left:898.00px;top:140.00px;font-size:11px;line-height:11px;font-weight:400;font-style:normal;color:#4a4a4a;white-space:pre;transform:scaleX(1.1061);transform-origin:0 0;">287.00</div><div style="position:absolute;left:941.30px;top:140.00px;font-size:11px;line-height:11px;font-weight:400;font-style:normal;color:#111;white-space:pre;">$</div><div style="position:absolute;left:5.60px;top:170.80px;font-size:11px;line-height:11px;font-weight:700;font-style:normal;color:#fff;white-space:pre;transform:scaleX(1.1146);transform-origin:0 0;-webkit-text-stroke:0.3px;">Général</div><div style="position:absolute;left:60.42px;top:170.80px;font-size:11px;line-height:11px;font-weight:700;font-style:normal;color:#111;white-space:pre;transform:scaleX(1.1830);transform-origin:0 0;-webkit-text-stroke:0.3px;">Historique</div><div style="position:absolute;left:133.40px;top:170.80px;font-size:11px;line-height:11px;font-weight:700;font-style:normal;color:#fff;white-space:pre;transform:scaleX(1.2026);transform-origin:0 0;-webkit-text-stroke:0.3px;">Portrait</div><div style="position:absolute;left:190.60px;top:170.80px;font-size:11px;line-height:11px;font-weight:700;font-style:normal;color:#fff;white-space:pre;transform:scaleX(1.1426);transform-origin:0 0;-webkit-text-stroke:0.3px;">Transaction</div><div style="position:absolute;left:269.44px;top:170.80px;font-size:11px;line-height:11px;font-weight:700;font-style:normal;color:#fff;white-space:pre;transform:scaleX(1.1560);transform-origin:0 0;-webkit-text-stroke:0.3px;">Recouvrement</div><div style="position:absolute;left:366.43px;top:170.80px;font-size:11px;line-height:11px;font-weight:700;font-style:normal;color:#fff;white-space:pre;transform:scaleX(1.1674);transform-origin:0 0;-webkit-text-stroke:0.3px;">PPA auto</div><div style="position:absolute;left:431.60px;top:170.80px;font-size:11px;line-height:11px;font-weight:700;font-style:normal;color:#fff;white-space:pre;transform:scaleX(1.1688);transform-origin:0 0;-webkit-text-stroke:0.3px;">Arrêt de paiement</div><div style="position:absolute;left:549.45px;top:170.80px;font-size:11px;line-height:11px;font-weight:700;font-style:normal;color:#fff;white-space:pre;transform:scaleX(1.1462);transform-origin:0 0;-webkit-text-stroke:0.3px;">Banque</div><div style="position:absolute;left:604.40px;top:170.80px;font-size:11px;line-height:11px;font-weight:700;font-style:normal;color:#fff;white-space:pre;transform:scaleX(1.2043);transform-origin:0 0;-webkit-text-stroke:0.3px;">Effet</div><div style="position:absolute;left:642.37px;top:170.80px;font-size:11px;line-height:11px;font-weight:700;font-style:normal;color:#fff;white-space:pre;transform:scaleX(1.2322);transform-origin:0 0;-webkit-text-stroke:0.3px;">Information</div><div style="position:absolute;left:725.48px;top:170.80px;font-size:11px;line-height:11px;font-weight:700;font-style:normal;color:#fff;white-space:pre;transform:scaleX(1.1192);transform-origin:0 0;-webkit-text-stroke:0.3px;">Encaissement</div><div style="position:absolute;left:818.60px;top:170.80px;font-size:11px;line-height:11px;font-weight:700;font-style:normal;color:#fff;white-space:pre;transform:scaleX(1.1018);transform-origin:0 0;-webkit-text-stroke:0.3px;">Assurance</div><div style="position:absolute;left:889.36px;top:170.80px;font-size:11px;line-height:11px;font-weight:700;font-style:normal;color:#fff;white-space:pre;transform:scaleX(1.2362);transform-origin:0 0;-webkit-text-stroke:0.3px;">Intervenant</div><div style="position:absolute;left:972.60px;top:170.80px;font-size:11px;line-height:11px;font-weight:700;font-style:normal;color:#fff;white-space:pre;transform:scaleX(1.1038);transform-origin:0 0;-webkit-text-stroke:0.3px;">Suivi</div><div style="position:absolute;left:4.40px;top:190.80px;font-size:11px;line-height:11px;font-weight:700;font-style:normal;color:#fff;white-space:pre;transform:scaleX(1.1966);transform-origin:0 0;-webkit-text-stroke:0.3px;">Notes</div><div style="position:absolute;left:49.44px;top:190.80px;font-size:11px;line-height:11px;font-weight:700;font-style:normal;color:#fff;white-space:pre;transform:scaleX(1.1590);transform-origin:0 0;-webkit-text-stroke:0.3px;">Fichier joint</div><div style="position:absolute;left:8.56px;top:219.70px;font-size:11px;line-height:11px;font-weight:700;font-style:normal;color:#111;white-space:pre;transform:scaleX(1.1395);transform-origin:0 0;-webkit-text-stroke:0.3px;">Liste des baux et des demandes</div><div style="position:absolute;left:791.06px;top:219.60px;font-size:11px;line-height:11px;font-weight:400;font-style:normal;color:#111;white-space:pre;transform:scaleX(1.1418);transform-origin:0 0;">Inclure les annulés</div><div style="position:absolute;left:923.13px;top:219.60px;font-size:11px;line-height:11px;font-weight:400;font-style:normal;color:#111;white-space:pre;transform:scaleX(1.0732);transform-origin:0 0;">Rechercher</div><div style="position:absolute;left:29.06px;top:258.60px;font-size:11px;line-height:11px;font-weight:700;font-style:normal;color:#0f0f78;white-space:pre;transform:scaleX(1.2447);transform-origin:0 0;-webkit-text-stroke:0.3px;">Demande/Bail/Contrat</div><div style="position:absolute;left:244.89px;top:258.60px;font-size:11px;line-height:11px;font-weight:700;font-style:normal;color:#0f0f78;white-space:pre;transform:scaleX(1.2125);transform-origin:0 0;-webkit-text-stroke:0.3px;">Numéro</div><div style="position:absolute;left:405.40px;top:258.60px;font-size:11px;line-height:11px;font-weight:700;font-style:normal;color:#0f0f78;white-space:pre;transform:scaleX(1.2097);transform-origin:0 0;-webkit-text-stroke:0.3px;">Statut</div><div style="position:absolute;left:530.24px;top:258.60px;font-size:11px;line-height:11px;font-weight:700;font-style:normal;color:#0f0f78;white-space:pre;transform:scaleX(1.0565);transform-origin:0 0;-webkit-text-stroke:0.3px;">Date</div><div style="position:absolute;left:609.78px;top:258.60px;font-size:11px;line-height:11px;font-weight:700;font-style:normal;color:#0f0f78;white-space:pre;transform:scaleX(1.2218);transform-origin:0 0;-webkit-text-stroke:0.3px;">Date de fin</div><div style="position:absolute;left:725.82px;top:253.00px;font-size:11px;line-height:11px;font-weight:700;font-style:normal;color:#0f0f78;white-space:pre;transform:scaleX(1.1842);transform-origin:0 0;-webkit-text-stroke:0.3px;">Date de</div><div style="position:absolute;left:715.76px;top:266.00px;font-size:11px;line-height:11px;font-weight:700;font-style:normal;color:#0f0f78;white-space:pre;transform:scaleX(1.2353);transform-origin:0 0;-webkit-text-stroke:0.3px;">résiliation</div><div style="position:absolute;left:812.00px;top:258.60px;font-size:11px;line-height:11px;font-weight:700;font-style:normal;color:#0f0f78;white-space:pre;transform:scaleX(1.2222);transform-origin:0 0;-webkit-text-stroke:0.3px;">Charge ($)</div><div style="position:absolute;left:917.00px;top:258.60px;font-size:11px;line-height:11px;font-weight:700;font-style:normal;color:#0f0f78;white-space:pre;transform:scaleX(1.1138);transform-origin:0 0;-webkit-text-stroke:0.3px;">Succ.</div><div style="position:absolute;left:7.67px;top:285.00px;font-size:11px;line-height:11px;font-weight:400;font-style:normal;color:#111;white-space:pre;transform:scaleX(1.1336);transform-origin:0 0;">Bail logement (Reconduction)</div><div style="position:absolute;left:199.94px;top:285.00px;font-size:11px;line-height:11px;font-weight:700;font-style:normal;color:#0f0f78;white-space:pre;transform:scaleX(1.2632);transform-origin:0 0;-webkit-text-stroke:0.3px;">B2012-00056-4</div><div style="position:absolute;left:360.39px;top:285.00px;font-size:11px;line-height:11px;font-weight:400;font-style:normal;color:#111;white-space:pre;transform:scaleX(1.1062);transform-origin:0 0;">Résilié</div><div style="position:absolute;left:508.20px;top:285.00px;font-size:11px;line-height:11px;font-weight:400;font-style:normal;color:#111;white-space:pre;transform:scaleX(1.1571);transform-origin:0 0;">2013-10-01</div><div style="position:absolute;left:611.90px;top:285.00px;font-size:11px;line-height:11px;font-weight:400;font-style:normal;color:#111;white-space:pre;transform:scaleX(1.1571);transform-origin:0 0;">2014-09-30</div><div style="position:absolute;left:714.60px;top:285.00px;font-size:11px;line-height:11px;font-weight:400;font-style:normal;color:#111;white-space:pre;transform:scaleX(1.1768);transform-origin:0 0;">2014-09-30</div><div style="position:absolute;left:849.40px;top:285.00px;font-size:11px;line-height:11px;font-weight:400;font-style:normal;color:#111;white-space:pre;transform:scaleX(1.2121);transform-origin:0 0;">287.00</div><div style="position:absolute;left:920.96px;top:285.00px;font-size:11px;line-height:11px;font-weight:400;font-style:normal;color:#111;white-space:pre;transform:scaleX(1.0409);transform-origin:0 0;">FOR</div><div style="position:absolute;left:7.67px;top:304.00px;font-size:11px;line-height:11px;font-weight:400;font-style:normal;color:#111;white-space:pre;transform:scaleX(1.1336);transform-origin:0 0;">Bail logement (Reconduction)</div><div style="position:absolute;left:199.92px;top:304.00px;font-size:11px;line-height:11px;font-weight:700;font-style:normal;color:#0f0f78;white-space:pre;transform:scaleX(1.2800);transform-origin:0 0;-webkit-text-stroke:0.3px;">B2012-00056-2</div><div style="position:absolute;left:360.41px;top:304.00px;font-size:11px;line-height:11px;font-weight:400;font-style:normal;color:#111;white-space:pre;transform:scaleX(1.0918);transform-origin:0 0;">Reconduit</div><div style="position:absolute;left:508.20px;top:304.00px;font-size:11px;line-height:11px;font-weight:400;font-style:normal;color:#111;white-space:pre;transform:scaleX(1.1571);transform-origin:0 0;">2012-10-01</div><div style="position:absolute;left:611.90px;top:304.00px;font-size:11px;line-height:11px;font-weight:400;font-style:normal;color:#111;white-space:pre;transform:scaleX(1.1571);transform-origin:0 0;">2013-09-30</div><div style="position:absolute;left:714.60px;top:304.00px;font-size:11px;line-height:11px;font-weight:400;font-style:normal;color:#111;white-space:pre;transform:scaleX(1.1768);transform-origin:0 0;">2014-09-30</div><div style="position:absolute;left:848.15px;top:304.00px;font-size:11px;line-height:11px;font-weight:400;font-style:normal;color:#111;white-space:pre;transform:scaleX(1.2500);transform-origin:0 0;">314.00</div><div style="position:absolute;left:920.96px;top:304.00px;font-size:11px;line-height:11px;font-weight:400;font-style:normal;color:#111;white-space:pre;transform:scaleX(1.0409);transform-origin:0 0;">FOR</div><div style="position:absolute;left:7.64px;top:323.00px;font-size:11px;line-height:11px;font-weight:400;font-style:normal;color:#111;white-space:pre;transform:scaleX(1.1617);transform-origin:0 0;">Bail logement (Bail réel)</div><div style="position:absolute;left:199.92px;top:323.00px;font-size:11px;line-height:11px;font-weight:700;font-style:normal;color:#0f0f78;white-space:pre;transform:scaleX(1.2800);transform-origin:0 0;-webkit-text-stroke:0.3px;">B2012-00056-1</div><div style="position:absolute;left:360.41px;top:323.00px;font-size:11px;line-height:11px;font-weight:400;font-style:normal;color:#111;white-space:pre;transform:scaleX(1.0918);transform-origin:0 0;">Reconduit</div><div style="position:absolute;left:508.20px;top:323.00px;font-size:11px;line-height:11px;font-weight:400;font-style:normal;color:#111;white-space:pre;transform:scaleX(1.1571);transform-origin:0 0;">2012-06-01</div><div style="position:absolute;left:611.90px;top:323.00px;font-size:11px;line-height:11px;font-weight:400;font-style:normal;color:#111;white-space:pre;transform:scaleX(1.1571);transform-origin:0 0;">2012-09-30</div><div style="position:absolute;left:714.60px;top:323.00px;font-size:11px;line-height:11px;font-weight:400;font-style:normal;color:#111;white-space:pre;transform:scaleX(1.1768);transform-origin:0 0;">2014-09-30</div><div style="position:absolute;left:848.15px;top:323.00px;font-size:11px;line-height:11px;font-weight:400;font-style:normal;color:#111;white-space:pre;transform:scaleX(1.2500);transform-origin:0 0;">314.00</div><div style="position:absolute;left:920.96px;top:323.00px;font-size:11px;line-height:11px;font-weight:400;font-style:normal;color:#111;white-space:pre;transform:scaleX(1.0409);transform-origin:0 0;">FOR</div><div style="position:absolute;left:7.67px;top:342.00px;font-size:11px;line-height:11px;font-weight:400;font-style:normal;color:#111;white-space:pre;transform:scaleX(1.1345);transform-origin:0 0;">Demande de logement</div><div style="position:absolute;left:199.91px;top:342.00px;font-size:11px;line-height:11px;font-weight:700;font-style:normal;color:#0f0f78;white-space:pre;transform:scaleX(1.2877);transform-origin:0 0;-webkit-text-stroke:0.3px;">D2011-00005</div><div style="position:absolute;left:360.36px;top:342.00px;font-size:11px;line-height:11px;font-weight:400;font-style:normal;color:#111;white-space:pre;transform:scaleX(1.1405);transform-origin:0 0;">Inactive</div><div style="position:absolute;left:508.20px;top:342.00px;font-size:11px;line-height:11px;font-weight:400;font-style:normal;color:#111;white-space:pre;transform:scaleX(1.1571);transform-origin:0 0;">2010-01-12</div><div style="position:absolute;left:611.90px;top:342.00px;font-size:11px;line-height:11px;font-weight:400;font-style:normal;color:#111;white-space:pre;transform:scaleX(1.1571);transform-origin:0 0;">2012-05-31</div><div style="position:absolute;left:920.96px;top:342.00px;font-size:11px;line-height:11px;font-weight:400;font-style:normal;color:#111;white-space:pre;transform:scaleX(1.0409);transform-origin:0 0;">FOR</div><div style="position:absolute;left:8.18px;top:485.90px;font-size:11px;line-height:11px;font-weight:700;font-style:normal;color:#111;white-space:pre;transform:scaleX(1.1186);transform-origin:0 0;-webkit-text-stroke:0.3px;">Recours</div><div style="position:absolute;left:729.34px;top:485.60px;font-size:11px;line-height:11px;font-weight:400;font-style:normal;color:#111;white-space:pre;transform:scaleX(1.1573);transform-origin:0 0;">Inclure les fermés et terminés</div><div style="position:absolute;left:923.44px;top:485.60px;font-size:11px;line-height:11px;font-weight:400;font-style:normal;color:#111;white-space:pre;transform:scaleX(1.0607);transform-origin:0 0;">Rechercher</div><div style="position:absolute;left:4.77px;top:522.80px;font-size:11px;line-height:11px;font-weight:700;font-style:normal;color:#111;white-space:pre;transform:scaleX(1.1337);transform-origin:0 0;-webkit-text-stroke:0.3px;">Étape de perception</div><div style="position:absolute;left:45.13px;top:547.00px;font-size:11px;line-height:11px;font-weight:700;font-style:normal;color:#0f0f78;white-space:pre;transform:scaleX(1.1690);transform-origin:0 0;-webkit-text-stroke:0.3px;">Étape</div><div style="position:absolute;left:152.10px;top:547.00px;font-size:11px;line-height:11px;font-weight:700;font-style:normal;color:#0f0f78;white-space:pre;transform:scaleX(1.1968);transform-origin:0 0;-webkit-text-stroke:0.3px;">Nom abrégé</div><div style="position:absolute;left:406.02px;top:547.00px;font-size:11px;line-height:11px;font-weight:700;font-style:normal;color:#0f0f78;white-space:pre;transform:scaleX(1.1847);transform-origin:0 0;-webkit-text-stroke:0.3px;">Description</div><div style="position:absolute;left:664.90px;top:547.00px;font-size:11px;line-height:11px;font-weight:700;font-style:normal;color:#0f0f78;white-space:pre;transform:scaleX(1.1660);transform-origin:0 0;-webkit-text-stroke:0.3px;">Catégorie</div><div style="position:absolute;left:778.60px;top:547.00px;font-size:11px;line-height:11px;font-weight:700;font-style:normal;color:#0f0f78;white-space:pre;transform:scaleX(1.1500);transform-origin:0 0;-webkit-text-stroke:0.3px;">Saisie le</div><div style="position:absolute;left:886.60px;top:547.00px;font-size:11px;line-height:11px;font-weight:700;font-style:normal;color:#0f0f78;white-space:pre;transform:scaleX(1.1615);transform-origin:0 0;-webkit-text-stroke:0.3px;">Saisie par</div><div style="position:absolute;left:56.60px;top:566.10px;font-size:11px;line-height:11px;font-weight:400;font-style:normal;color:#111;white-space:pre;transform:scaleX(1.0583);transform-origin:0 0;">00</div><div style="position:absolute;left:158.16px;top:566.10px;font-size:11px;line-height:11px;font-weight:400;font-style:normal;color:#111;white-space:pre;transform:scaleX(1.0390);transform-origin:0 0;">LOCATAIRE</div><div style="position:absolute;left:261.48px;top:566.10px;font-size:11px;line-height:11px;font-weight:400;font-style:normal;color:#111;white-space:pre;transform:scaleX(1.1250);transform-origin:0 0;">Locataire</div><div style="position:absolute;left:662.40px;top:566.10px;font-size:11px;line-height:11px;font-weight:400;font-style:normal;color:#111;white-space:pre;transform:scaleX(1.0426);transform-origin:0 0;">ORDINAIRE</div><div style="position:absolute;left:777.43px;top:566.10px;font-size:11px;line-height:11px;font-weight:400;font-style:normal;color:#111;white-space:pre;transform:scaleX(1.1727);transform-origin:0 0;">1900-01-01</div><div style="position:absolute;left:890.60px;top:566.10px;font-size:11px;line-height:11px;font-weight:400;font-style:normal;color:#111;white-space:pre;">SYSTEME</div>
</body></html>
